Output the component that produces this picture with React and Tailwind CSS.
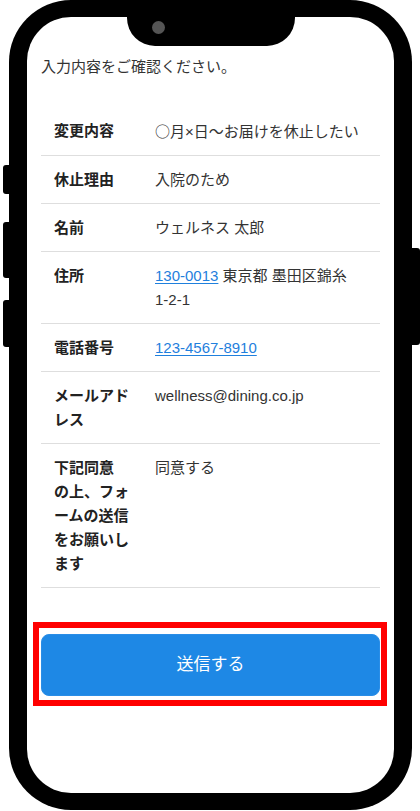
import React from "react";

const rows = [
  { label: ["変更内容"], value: <><span className="font-['Noto_Sans_CJK_JP',sans-serif]">○</span>月×日〜お届けを休止したい</> },
  { label: ["休止理由"], value: <>入院のため</> },
  { label: ["名前"], value: <>ウェルネス 太郎</> },
  {
    label: ["住所"],
    value: (
      <>
        <a href="#" className="text-[#1f80dd] underline underline-offset-2">130-0013</a> 東京都 墨田区錦糸
        <br />
        1-2-1
      </>
    ),
  },
  {
    label: ["電話番号"],
    value: <a href="#" className="text-[#1f80dd] underline underline-offset-2">123-4567-8910</a>,
  },
  { label: ["メールアド", "レス"], value: <>wellness@dining.co.jp</> },
  { label: ["下記同意", "の上、フォ", "ームの送信", "をお願いし", "ます"], value: <>同意する</> },
];

export default function App() {
  return (
    <div className="flex w-[420px] h-[811px] overflow-hidden bg-white font-['Liberation_Sans','Noto_Sans_CJK_JP',sans-serif] text-[#333]">
      {/* left side buttons */}
      <div className="w-[9px] shrink-0 pl-[3px] pt-[165px] flex flex-col">
        <div className="h-[29px] bg-black rounded-l-[3px]" />
        <div className="mt-[28px] h-[56px] bg-black rounded-l-[3px]" />
        <div className="mt-[22px] h-[47px] bg-black rounded-l-[3px]" />
      </div>

      {/* phone frame */}
      <div className="relative w-[403px] h-[810px] shrink-0 bg-black rounded-[62px] pt-[17px] pb-[17px] pl-[18px] pr-[18px]">
        {/* notch overlays screen */}
        <div className="absolute left-[118px] top-[16px] w-[168px] h-[30px] bg-black rounded-b-[28px] pl-[25px] pt-[5px]">
          <div className="w-[13px] h-[13px] rounded-full bg-[#555]" />
        </div>

        <div className="h-full bg-white rounded-[44px] overflow-hidden px-[14px] pt-[38px]">
          <p className="text-[15px] leading-[24px] text-[#333]">入力内容をご確認ください。</p>

          <div className="mt-[28px] flex flex-col">
            {rows.map((r, i) => (
              <div key={i} className="flex border-b border-[#dedede] pt-[12px] pb-[11px] text-[15px] leading-[24px]">
                <div className="w-[114px] shrink-0 pl-[13px] font-bold text-[#222] whitespace-nowrap">
                  {r.label.map((l, j) => (
                    <div key={j}>{l}</div>
                  ))}
                </div>
                <div className="flex-1 whitespace-nowrap text-[#333]">{r.value}</div>
              </div>
            ))}
          </div>

          <div className="mt-[34px] -ml-[8px] -mr-[7px] border-[6px] border-[#ff0000] pt-[6px] pl-[2px] pr-[1px] pb-[4px]">
            <button className="w-full h-[62px] rounded-[8px] bg-[#1e88e5] border border-[#2a8de6] text-white text-[17px] flex items-center justify-center">
              送信する
            </button>
          </div>
        </div>
      </div>

      {/* right side button */}
      <div className="w-[8px] shrink-0 pt-[248px]">
        <div className="h-[97px] bg-black rounded-r-[3px]" />
      </div>
    </div>
  );
}
